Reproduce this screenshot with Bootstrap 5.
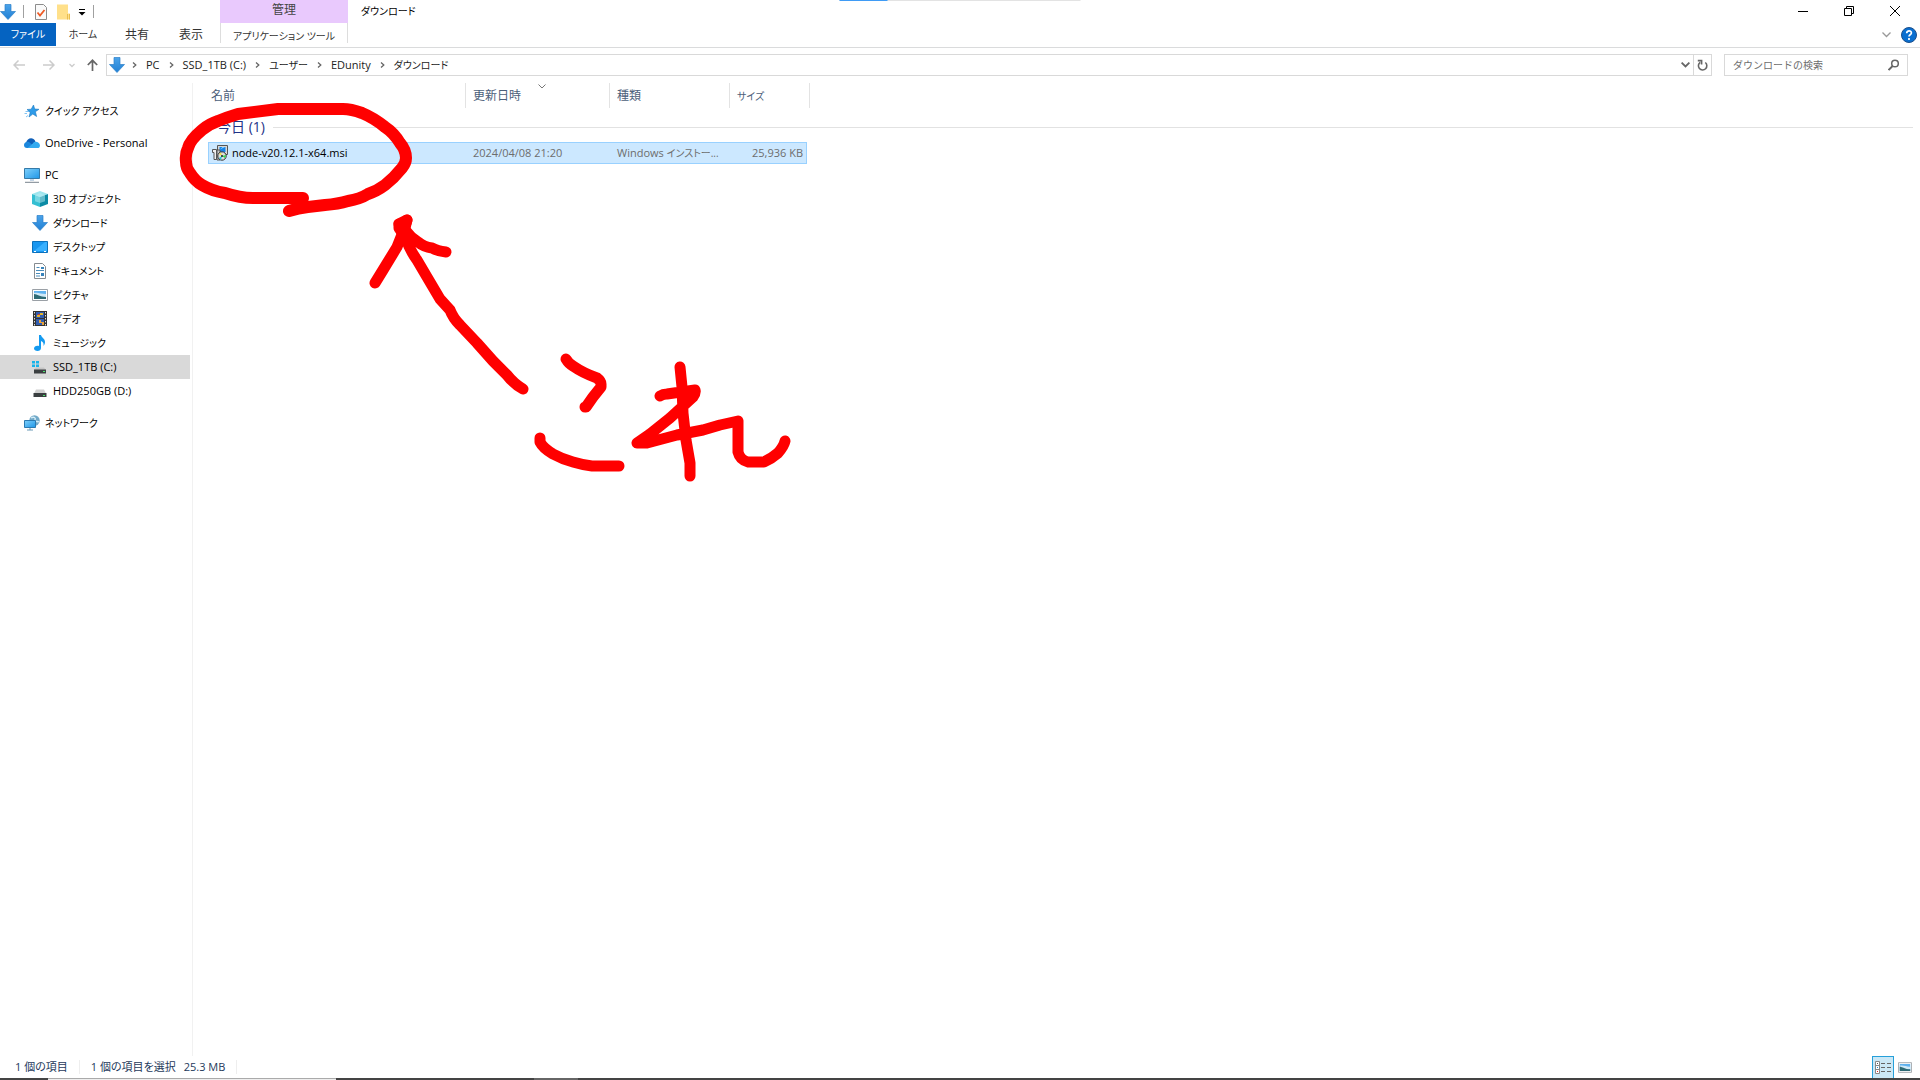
<!DOCTYPE html>
<html lang="ja">
<head>
<meta charset="utf-8">
<meta name="viewport" content="width=device-width, initial-scale=1">
<title>ダウンロード</title>
<link href="https://cdn.jsdelivr.net/npm/bootstrap@5.3.0/dist/css/bootstrap.min.css" rel="stylesheet">
<style>
body{font-family:"Open Sans","Noto Sans CJK JP",sans-serif;font-size:11px;line-height:20px;color:#000;background:#fff;font-feature-settings:"palt"}
svg{display:block;flex:none}
button{border:0;background:none;padding:0;color:inherit;font:inherit}
a{color:inherit;text-decoration:none}
.kana{font-size:10px}
.kanji{font-size:12px}
.loadbar{left:50%;transform:translateX(-50%);width:241px;height:1px;background:#e3e3e3;top:0}
.loadbar div{width:20%;height:1px;background:#3f9bf5}
.quick{width:220px;height:23px}
.vsep{width:1px;height:13px;background:#a0a0a0}
.manage{width:128px;height:23px;line-height:19px;background:#e9c9fd;color:#444}
.wintitle{padding-left:13px;line-height:22px}
.wctl{width:46px;height:21px}
.tabs{height:25px;border-bottom:1px solid #dadbdc;color:#333}
.tab-i{width:54px;height:23px;line-height:23px;text-align:center}
.tab-file{width:56px;background:#0563c1;color:#fff}
.tab-tool{width:128px;border:solid #ddd;border-width:0 1px;height:20px;padding-top:3px;margin-left:2px}
.addr{height:35px;padding:6px 12px 7px 0}
.navs{width:106px;height:22px;padding-left:13px}
.box{border:1px solid #d9d9d9;height:22px}
.crumbs{gap:9px;color:#222}
.refresh{width:18px;border-left:1px solid #d9d9d9;height:20px}
.searchbox{width:184px;margin-left:12px}
.searchbox input{border:0;outline:0;width:130px;padding:0 0 0 8px;color:#666;background:none;height:20px}
.searchbox input::placeholder{color:#6d6d6d}
.pane{width:193px;flex:none;padding-top:16px;border-right:1px solid #f1f1f1;white-space:nowrap}
.pane a{display:flex;align-items:center;gap:5px;height:24px;padding-left:24px;margin-right:2px}
.pane a.sub{padding-left:32px}
.pane a.gap-t{margin-top:8px}
.pane a.sel{background:#d9d9d9}
.listing{padding:0 7px 0 15px}
.files{table-layout:fixed;border-collapse:separate;border-spacing:0;width:100%}
.files th{font-weight:400;text-align:left}
.files thead th{height:25px;color:#4c607a;padding:0 0 0 7px;border-right:1px solid #e3e3e3;position:relative}
.files thead th:first-child{padding-left:3px}
.files thead th:last-child{border:0}
.sorted{left:50%;top:1px;position:absolute}
.grp{height:34px;padding:4px 0 0 9px;color:#1e3287;font-size:14px}
.grp i{height:1px;background:#e2e2e2;flex:1;margin-left:8px}
.pick td{height:22px;line-height:20px;padding:0 0 0 7px;background:#cce8ff;border:solid #99d1ff;border-width:1px 0;color:#6d6d6d;white-space:nowrap;overflow:hidden}
.pick td:first-child{border-left-width:1px;padding-left:3px;color:#000}
.pick td.sz{border-right-width:1px;padding-right:3px;text-align:right}
.pick td.none{background:none;border:0}
.ink{left:0;top:0;pointer-events:none}
.status{height:22px;padding-left:15px;color:#1e395b}
.status .vs{width:1px;height:14px;background:#eee;margin:0 11px}
.vbtn{width:22px;height:22px;border:1px solid #26a0da;border-bottom:0;background:#cbe8f6}
.strip{height:2px;background:#444}
.strip .win{width:288px;margin-left:48px;height:2px;background:#eee;border-top:1px solid #aaa}
.strip .app{width:44px;margin-left:198px;height:2px;background:#666}
</style>
<script src="https://cdn.jsdelivr.net/npm/bootstrap@5.3.0/dist/js/bootstrap.bundle.min.js"></script>
</head>
<body>
<svg width="0" height="0" class="position-absolute" aria-hidden="true">
<defs>
<linearGradient id="gb" x1="0" y1="0" x2="0" y2="1"><stop offset="0" stop-color="#4aa3ea"/><stop offset="1" stop-color="#2180d4"/></linearGradient>
<linearGradient id="gs" x1="0" y1="0" x2="1" y2="1"><stop offset="0" stop-color="#7fd0fb"/><stop offset="1" stop-color="#1f97e8"/></linearGradient>
<symbol id="down" viewBox="0 0 16 16"><path d="M5 .5h6v7h4.500L8 15.500.5 7.500H5z" fill="url(#gb)" stroke="#2b7fc8" stroke-width=".7"/></symbol>
<symbol id="chev" viewBox="0 0 5 8"><path d="M1 1.500 3.800 4 1 6.500" fill="none" stroke="#666" stroke-width="1.300"/></symbol>
<symbol id="pic" viewBox="0 0 16 12"><path d="M.5.500h15v11H.5z" fill="#fff" stroke="#9aa0a6"/><path d="M2 2h12v8H2z" fill="#5fb1ee"/><path d="M2 4c4-1 7 1 12 1v3H2z" fill="#cfe9f7"/><path d="M2 5c3 0 6 3 12 3v2H2z" fill="#2e6a74"/></symbol>
</defs>
</svg>
<div class="d-flex flex-column vh-100 overflow-hidden position-relative">
<div class="loadbar position-absolute"><div></div></div>
<header>
<div class="d-flex align-items-start">
 <div class="quick d-flex align-items-center">
  <svg width="16" height="16"><use href="#down"/></svg>
  <span class="vsep" style="margin-left:7px"></span>
  <button aria-label="プロパティ" style="margin-left:11px"><svg width="12" height="16" viewBox="0 0 12 16"><path d="M.5.500h8l3 3v12H.5z" fill="#fafafa" stroke="#8c8c8c"/><path d="m2.500 8.500 2.500 3 4.500-5.500" fill="none" stroke="#ee5a24" stroke-width="1.800"/></svg></button>
  <button aria-label="新しいフォルダー" style="margin-left:10px"><svg width="13" height="16" viewBox="0 0 13 16"><path d="M0 .5h11v9h2V15.500H0z" fill="#ffe08a"/><path d="M10.500 10v5.500M12.500 10v5.500" stroke="#e8bd50"/></svg></button>
  <button aria-label="カスタマイズ" style="margin-left:8px"><svg width="8" height="8" viewBox="0 0 8 8"><path d="M1 1.500h6" stroke="#000"/><path d="M.5 4h7L4 7.500z" fill="#000"/></svg></button>
  <span class="vsep" style="margin-left:7px"></span>
 </div>
 <div class="manage kanji text-center">管理</div>
 <div class="wintitle kana flex-fill">ダウンロード</div>
 <button class="wctl d-flex align-items-center justify-content-center" aria-label="最小化"><svg width="10" height="10"><path d="M0 5.500h10" stroke="#000"/></svg></button>
 <button class="wctl d-flex align-items-center justify-content-center" aria-label="元に戻す"><svg width="10" height="10" fill="none" stroke="#000"><path d="M.5 2.500h7v7h-7zM2.500 2.500v-2h7v7h-2"/></svg></button>
 <button class="wctl d-flex align-items-center justify-content-center" style="margin-right:2px" aria-label="閉じる"><svg width="10" height="10" stroke="#000"><path d="m0 0 10 10M10 0 0 10"/></svg></button>
</div>
<nav class="tabs d-flex">
 <button class="tab-i tab-file kana">ファイル</button>
 <button class="tab-i kana">ホーム</button>
 <button class="tab-i kanji">共有</button>
 <button class="tab-i kanji">表示</button>
 <button class="tab-tool kana">アプリケーション ツール</button>
 <div class="ms-auto d-flex align-items-center gap-2" style="padding-right:3px">
  <button aria-label="リボンを折りたたむ"><svg width="9" height="6" style="margin-right:2px" fill="none" stroke="#999" stroke-width="1.300"><path d="m.500.500 4 4 4-4"/></svg></button>
  <button aria-label="ヘルプ"><svg width="16" height="16" viewBox="0 0 16 16"><circle cx="8" cy="8" r="7.500" fill="#0a6fd0" stroke="#1b4f8c"/><path d="M5.700 6.200C5.700 3 10.500 3.200 10.400 6 10.300 7.800 8 7.800 8 9.500M8 11v2" fill="none" stroke="#fff" stroke-width="1.700"/></svg></button>
 </div>
</nav>
<div class="addr d-flex align-items-center">
 <div class="navs d-flex align-items-center">
  <button aria-label="戻る"><svg width="12" height="10" fill="none" stroke="#ccc" stroke-width="1.500"><path d="M12 5H1M5.500.5 1 5l4.500 4.500"/></svg></button>
  <button aria-label="進む" style="margin-left:18px"><svg width="12" height="10" fill="none" stroke="#ccc" stroke-width="1.500"><path d="M0 5h11M6.500.5 11 5 6.500 9.500"/></svg></button>
  <button aria-label="最近の場所" style="margin-left:14px"><svg width="6" height="5" fill="none" stroke="#ccc" stroke-width="1.300"><path d="m.500 1 2.500 2.500L5.500 1"/></svg></button>
  <button aria-label="上へ" style="margin-left:12px"><svg width="11" height="12" fill="none" stroke="#666" stroke-width="1.700"><path d="M5.500 12V1.500M.8 6l4.700-4.700L10.200 6"/></svg></button>
 </div>
 <div class="box d-flex flex-fill align-items-center">
  <div class="crumbs d-flex align-items-center flex-fill">
   <svg width="16" height="16" style="margin:0 -2px 0 2px"><use href="#down"/></svg>
   <svg width="5" height="8"><use href="#chev"/></svg><a href="#">PC</a>
   <svg width="5" height="8"><use href="#chev"/></svg><a href="#">SSD_1TB (C:)</a>
   <svg width="5" height="8"><use href="#chev"/></svg><a href="#" class="kana">ユーザー</a>
   <svg width="5" height="8"><use href="#chev"/></svg><a href="#">EDunity</a>
   <svg width="5" height="8"><use href="#chev"/></svg><a href="#" class="kana">ダウンロード</a>
  </div>
  <button aria-label="履歴" style="margin-right:3px"><svg width="9" height="6" fill="none" stroke="#666" stroke-width="1.800"><path d="m.600.600 3.900 3.900L8.400.6"/></svg></button>
  <button aria-label="更新" class="refresh d-flex align-items-center justify-content-center"><svg width="11" height="12" viewBox="0 0 11 12" fill="none" stroke="#666" stroke-width="1.600"><path d="M8.300 3.500A4.200 4.200 0 1 1 3.200 3.300M.8 1.600H4.600V5.400"/></svg></button>
 </div>
 <label class="box searchbox d-flex align-items-center justify-content-between pe-2"><input type="text" class="kana" aria-label="検索" placeholder="ダウンロードの検索">
  <svg width="11" height="12" fill="none" stroke="#666"><circle cx="7" cy="4.500" r="3.300" stroke-width="1.500"/><path d="M4.600 7 .6 11" stroke-width="1.800"/></svg></label>
</div>
</header>
<main class="d-flex flex-fill">
<nav class="pane">
 <a href="#" class="kana"><svg width="16" height="16" viewBox="0 0 16 16"><path d="m9.500 2 1.200 4 4.300.3-3.600 2.400 1.200 4.800L8.800 11 5 14l1.200-4.600L3 6.500l4.200-.3z" fill="#2d9be9" stroke="#1c78c0" stroke-width=".6"/><path d="M3 10.500H.5M4 12.500 2 14M5 8.500H1.500" stroke="#64b5f0" stroke-width=".8"/></svg>クイック アクセス</a>
 <a href="#" class="gap-t"><svg width="16" height="12" viewBox="0 0 16 12"><path d="M2 6C3 1 9-.8 11.500 4.500L8 8z" fill="#0f5fb8"/><path d="M0 8c0-2.500 2.500-4 5-3l7 6H3C1 11 0 9.700 0 8z" fill="#1b87dc"/><path d="M8.500 7c1.500-3.600 7-2.600 7.500 1.400 0 1.600-1 2.600-2.500 2.600H3.500z" fill="#32aaf0"/></svg>OneDrive - Personal</a>
 <a href="#" class="gap-t"><svg width="16" height="16" viewBox="0 0 16 16"><path d="M.5 1.500h15v10H.5z" fill="url(#gs)" stroke="#357aa8"/><path d="M6 13h4" stroke="#8ac"/><path d="M1 15.300h14" stroke="#77838c"/></svg>PC</a>
 <a href="#" class="sub kana"><svg width="16" height="16" viewBox="0 0 16 16"><path d="M0 3 8 0l8 3-8 3z" fill="#9ee5ee"/><path d="m0 3 8 3v10l-8-3z" fill="#35bfd2"/><path d="m8 6 8-3v10l-8 3z" fill="#0c8ba5"/><path d="m3 4.200 5-2.200 5 2.200v6L8 12l-5-1.800z" fill="#b9eef3" opacity=".5"/></svg>3D オブジェクト</a>
 <a href="#" class="sub kana"><svg width="16" height="16"><use href="#down"/></svg>ダウンロード</a>
 <a href="#" class="sub kana"><svg width="16" height="12" viewBox="0 0 16 12"><path d="M.5.500h15v11H.5z" fill="#1997f0" stroke="#0c72bd"/><path d="m2 10 11-9h2v9z" fill="#38b0ff"/><path d="M2 10.500h2M12 10.500h2" stroke="#fff"/></svg>デスクトップ</a>
 <a href="#" class="sub kana"><svg width="16" height="16" viewBox="0 0 16 16"><path d="M2.500.500h8l3 3v12h-11z" fill="#fff" stroke="#858b90"/><path d="M4.500 4.500h3M4 7.500h8M4 10.500h4M4 13h4" stroke="#4a8dbb"/><path d="M9 4h3v2H9zM9 10h3v3H9z" fill="#3783bb"/></svg>ドキュメント</a>
 <a href="#" class="sub kana"><svg width="16" height="12"><use href="#pic"/></svg>ピクチャ</a>
 <a href="#" class="sub kana"><svg width="16" height="16" viewBox="0 0 16 16"><path d="M1 0h14v15H1z" fill="#333"/><path d="M2.500 1v14M13.500 1v14" stroke="#ddd" stroke-dasharray="1.500 1.500"/><path d="M4 1h8v6H4zM4 8h8v6H4z" fill="#315db0"/><path d="M8 2h3v2H8zM5 4h3v2H5z" fill="#e3b52b"/><path d="M7 9h2v2h3v3h-2v-2H7z" fill="#e8a23b"/><path d="M6 3h2v1H6z" fill="#d33"/></svg>ビデオ</a>
 <a href="#" class="sub kana"><svg width="16" height="16" viewBox="0 0 16 16"><path d="M7 0h2c.5 3 4 3.500 4 7 0 1.500-.5 2.500-1.500 4 .5-3-.5-4-2.500-5v7c0 2-1.500 3-3.500 3S2 15 2 13.500c0-2 2.500-3.500 5-2.500z" fill="#149af0"/></svg>ミュージック</a>
 <a href="#" class="sub sel"><svg width="16" height="16" viewBox="0 0 16 16"><path d="M0 2h3v2.500H0zM4 2h3v2.500H4zM0 5.500h3V8H0zM4 5.500h3V8H4z" fill="#18b4ea"/><path d="M4 8.500h8l2 2.500H2z" fill="#c5c5c5"/><path d="M2 10.500h12v4H2z" fill="#3b3f41"/><path d="M11 12h2v1h-2z" fill="#4be36a"/></svg>SSD_1TB (C:)</a>
 <a href="#" class="sub"><svg width="16" height="16" viewBox="0 0 16 16"><path d="M4 6.500h8l2 4H2z" fill="#d0d0d0"/><path d="M1.500 10h13v4h-13z" fill="#3b3f41"/><path d="M11 12h2v1h-2z" fill="#4be36a"/></svg>HDD250GB (D:)</a>
 <a href="#" class="gap-t kana"><svg width="16" height="16" viewBox="0 0 16 16"><circle cx="10.500" cy="5.500" r="5.200" fill="#72a9c8"/><path d="M7 3c3-2 5 0 4 2s3 1 4 2" fill="none" stroke="#d3ecf7" stroke-width="1.500"/><path d="M.5 5.500h11v7H.5z" fill="url(#gs)" stroke="#2b7ab0"/><path d="M6 13v2M3 15h6" stroke="#6d9cb8"/></svg>ネットワーク</a>
</nav>
<section class="listing flex-fill">
 <table class="files">
 <colgroup><col style="width:258px"><col style="width:144px"><col style="width:120px"><col style="width:77px"><col style="width:3px"><col></colgroup>
 <thead><tr><th class="kanji">名前</th><th class="kanji">更新日時<svg class="sorted" width="8" height="5" fill="none" stroke="#777"><path d="m.500.500 3.500 3.500L7.500.5"/></svg></th><th class="kanji">種類</th><th colspan="2" class="kana">サイズ</th><th></th></tr></thead>
 <tbody>
 <tr><th colspan="6" class="p-0"><div class="grp d-flex align-items-center">今日 (1)<i></i></div></th></tr>
 <tr class="pick"><td><div class="d-flex align-items-center gap-1"><svg width="16" height="16" viewBox="0 0 16 16"><path d="M5.500.5h10v9h-10z" fill="#d8d8d8" stroke="#555"/><path d="M7.500 2h6v5h-6z" fill="#1682e8"/><path d="m8 4.500 2.500-2.500H13z" fill="#8ed8ff"/><path d="M.5 4.500h4v10H2v-7H.5z" fill="#eee" stroke="#555"/><path d="M5 5h3v10H5z" fill="#c9c9c9" stroke="#555"/><circle cx="10" cy="11" r="4.200" fill="#ddd" stroke="#333"/><path d="M10 11 7 9l2-1.500z" fill="#f7e23e"/><path d="m10 11 4-1-1 3z" fill="#2bd948"/><path d="m10 11-1 4-2-2z" fill="#20c6d9"/><circle cx="10" cy="11" r="1" fill="#222"/></svg>node-v20.12.1-x64.msi</div></td><td>2024/04/08 21:20</td><td>Windows <span class="kana">インストー...</span></td><td class="sz">25,936 KB</td><td class="none"></td><td class="none"></td></tr>
 </tbody></table>
</section>
</main>
<footer>
 <div class="status d-flex align-items-center">
  <span>1 個の項目</span><span class="vs"></span><span>1 個の項目を選択</span><span class="ms-2">25.3 MB</span><span class="vs"></span>
  <button class="vbtn ms-auto d-flex align-items-center justify-content-center" aria-label="詳細"><svg width="16" height="14" viewBox="0 0 16 14"><path d="M.5.500h4v12h-4zM.5 4.500h4M.5 8.500h4" fill="#fff" stroke="#888"/><path d="M6 2.500h4M12 2.500h4M6 6.500h4M12 6.500h4M6 10.500h4M12 10.500h4" stroke="#666"/><path d="M2 2h1v1H2z" fill="#555"/><path d="M2 6h1v1H2z" fill="#28c"/><path d="M2 10h1v1H2z" fill="#d22"/></svg></button>
  <button class="ms-1 me-2" aria-label="大アイコン"><svg width="14" height="11"><use href="#pic"/></svg></button>
 </div>
 <div class="strip d-flex"><div class="win"></div><div class="app"></div></div>
</footer>
<svg class="ink position-absolute" width="820" height="500" fill="none" stroke="#f00" stroke-width="11" stroke-linecap="round" stroke-linejoin="round" aria-hidden="true">
<path stroke-width="12" d="M289 211Q298 208 308 207L325 205Q338 204 348 201Q360 199 368 194Q377 191 385 185Q394 178 402 168Q406 163 406 158Q406 150 400 143Q394 133 385 127Q374 118 362 113Q351 109 343 109H278L238 114Q228 117 218 121Q209 124 202 130Q190 140 188 148Q185 154 186 162Q186 168 190 173Q195 181 202 185Q212 191 225 193Q240 198 253 198H303L299 205"/>
<path d="M523 389Q514 384 507 375L493 361 477 343 460 325Q453 318 450 310L440 299 427 277 417 260Q409 249 406 238L399 228V224M375 283 383 270 397 247 403 232 407 220M446 252Q437 251 432 248Q424 247 418 242Q411 238 406 231"/>
<path d="M399 224 407 220 403 236z"/>
<path d="M566 359Q569 364 573 366Q583 373 597 378Q601 381 601 384V387L593 397 586 407H585M540 438V442Q543 448 553 454Q562 459 573 462Q583 465 592 466H619"/>
<path d="M680 367 682 387 683 413 686 440 690 463V476M660 396Q663 394 667 394L695 390Q696 393 693 397L670 418 650 434 637 443H647L677 435 703 430 720 425 738 421V452Q740 460 748 462H764Q771 459 778 453Q784 446 785 441"/>
</svg>
</div>
</body>
</html>
